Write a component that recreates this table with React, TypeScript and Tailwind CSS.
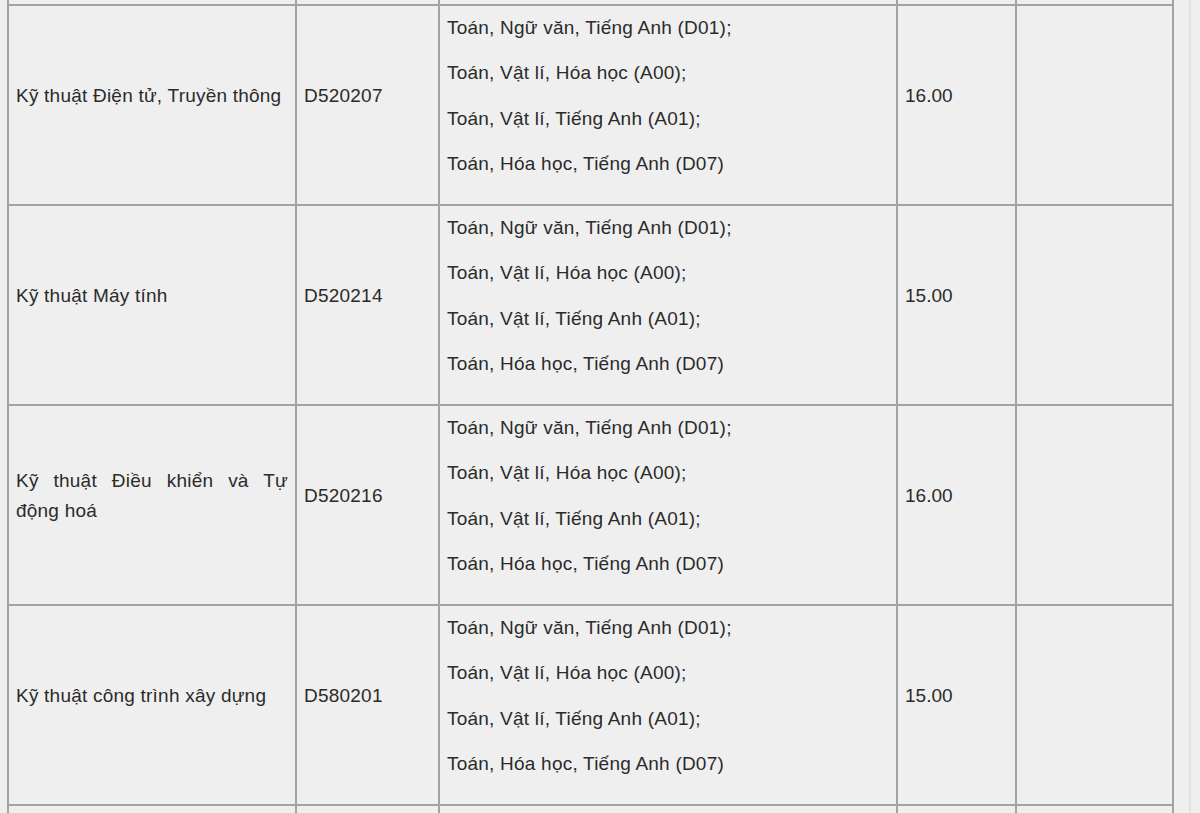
const rows = [
  { name: 'Kỹ thuật Điện tử, Truyền thông', code: 'D520207', score: '16.00' },
  { name: 'Kỹ thuật Máy tính', code: 'D520214', score: '15.00' },
  { name: 'Kỹ thuật Điều khiển và Tự động hoá', code: 'D520216', score: '16.00' },
  { name: 'Kỹ thuật công trình xây dựng', code: 'D580201', score: '15.00' },
];

const combos = [
  'Toán, Ngữ văn, Tiếng Anh (D01);',
  'Toán, Vật lí, Hóa học (A00);',
  'Toán, Vật lí, Tiếng Anh (A01);',
  'Toán, Hóa học, Tiếng Anh (D07)',
];

const cell = 'border-2 border-[#a3a3a3] align-middle px-[7px] py-[8px]';

export default function App() {
  return (
    <div
      className="relative h-[813px] w-[1200px] overflow-hidden bg-[#efefef] text-[#2b2b2b]"
      style={{ fontFamily: '"Liberation Sans", Arial, sans-serif' }}
    >
      <div className="pl-[7px]">
        <table className="-mt-[2px] w-[1165px] table-fixed border-collapse text-[19px] leading-[30px] tracking-[0.22px]">
          <colgroup>
            <col className="w-[288px]" />
            <col className="w-[143px]" />
            <col className="w-[458px]" />
            <col className="w-[119px]" />
            <col className="w-[157px]" />
          </colgroup>
          <tbody>
            <tr className="h-[6px]">
              <td className="border-2 border-[#a3a3a3]" />
              <td className="border-2 border-[#a3a3a3]" />
              <td className="border-2 border-[#a3a3a3]" />
              <td className="border-2 border-[#a3a3a3]" />
              <td className="border-2 border-[#a3a3a3]" />
            </tr>
            {rows.concat([{ name: '', code: '', score: '' }]).map((r, i) => (
              <tr key={i} className="h-[200px]">
                <td className={cell}>
                  {r.name && <p className="mb-[19px] text-justify">{r.name}</p>}
                </td>
                <td className={cell}>
                  {r.code && <p className="mb-[19px]">{r.code}</p>}
                </td>
                <td className="border-2 border-[#a3a3a3] px-[7px] pb-[9px] pt-[6px] align-middle">
                  {r.name &&
                    combos.map((c) => (
                      <p key={c} className="mb-[15.3px]">
                        {c}
                      </p>
                    ))}
                </td>
                <td className={cell}>
                  {r.score && <p className="mb-[19px] tracking-normal">{r.score}</p>}
                </td>
                <td className={cell} />
              </tr>
            ))}
          </tbody>
        </table>
      </div>
      <div className="absolute right-[9px] top-0 h-full w-[2px] bg-[#e2e2e2]" />
    </div>
  );
}
